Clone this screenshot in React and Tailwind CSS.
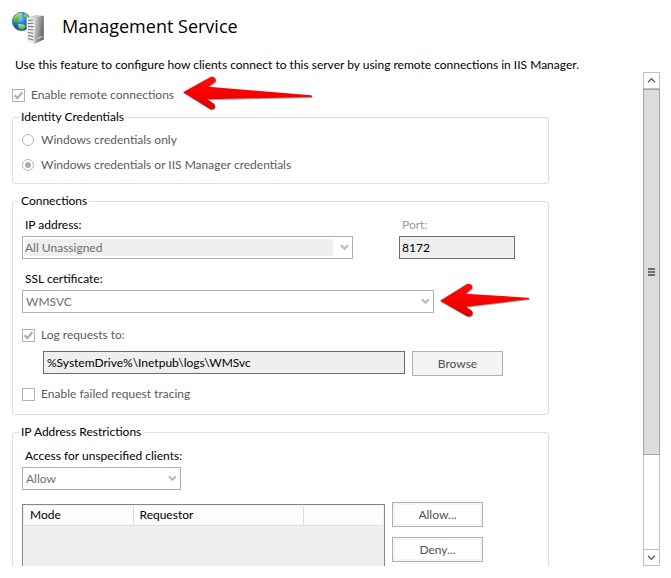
import React from "react";

function ServerGlobeIcon() {
  return (
    <svg width="33" height="33" viewBox="0 0 33 33" aria-hidden="true" className="shrink-0">
      <defs>
        <radialGradient id="sea" cx="0.4" cy="0.3" r="0.75">
          <stop offset="0" stopColor="#9fd6ff" />
          <stop offset="0.4" stopColor="#2f7fdc" />
          <stop offset="1" stopColor="#08319a" />
        </radialGradient>
        <linearGradient id="side" x1="0" y1="0" x2="1" y2="0.4">
          <stop offset="0" stopColor="#dcdcdc" />
          <stop offset="0.5" stopColor="#a2a2a2" />
          <stop offset="1" stopColor="#666" />
        </linearGradient>
        <linearGradient id="land" x1="0" y1="0" x2="0" y2="1">
          <stop offset="0" stopColor="#b9ec78" />
          <stop offset="1" stopColor="#2f9a2c" />
        </linearGradient>
      </defs>
      <circle cx="9.5" cy="9.5" r="9.2" fill="url(#sea)" stroke="#1650a8" strokeWidth="0.5" />
      <path d="M1.6 5.4 4.6 2 9.5 0.9 10.6 2.6 8.2 4.4 8.6 6.4 6 8 5.2 10.6 3 11.2 0.9 9Z" fill="url(#land)" />
      <path d="M12.5 1.6 16.5 4 18 7.5 14.5 7.5 12 5Z" fill="url(#land)" />
      <path d="M6.2 12 11 12.2 14 14.2 11.4 17.6 8 18.2 6.4 15.5Z" fill="url(#land)" />
      <path d="M14.6 5.6 22.4 4.4 22.4 31.8 14.6 29.4Z" fill="#ececec" />
      <path d="M22.4 4.4 31.8 3.8 31.8 27.4 22.4 32Z" fill="url(#side)" />
      <path d="M14.6 5.6 24 3 31.8 3.8 22.4 5.6Z" fill="#c9c9c9" />
      <path
        d="M16 8.5 21.4 8M16 11.5 21.4 11.2M16 14.5 21.4 14.6M16 17.5 21.4 18M16 20.5 21.4 21.3M16 23.5 21.4 24.6M16 26.5 21.4 28"
        stroke="#777"
        strokeWidth="1.1"
      />
      <path d="M25.6 26.6 30.6 24.4" stroke="#e6e6e6" strokeWidth="1" />
    </svg>
  );
}

function RedArrow({ path, width, className }) {
  return (
    <svg width={width} height="38" viewBox={`0 0 ${width} 38`} aria-hidden="true" className={className}>
      <defs>
        <linearGradient id="red" x1="0" y1="0" x2="0" y2="1">
          <stop offset="0" stopColor="#ff0a0a" />
          <stop offset="0.5" stopColor="#fb0000" />
          <stop offset="1" stopColor="#d60000" />
        </linearGradient>
      </defs>
      <path d={path} transform="translate(0.6 1)" fill="#000" opacity="0.35" />
      <path d={path} fill="url(#red)" />
    </svg>
  );
}

const LONG_ARROW =
  "M1 18.3 28 3.3C32 1.5 35.5 5 33 8L26.5 12.7 129 21.3C130.6 21.7 130.6 22.7 129 22.9L25.5 25.2 32 29.8C35 33 31.5 37 27.5 34.8Z";
const SHORT_ARROW =
  "M1 18.7 27.5 2.3C31.5 0.5 35 4 32.4 7L26.7 11.7 89 15.7C90.6 16 90.6 17 89 17.2L27 24.7 32.6 28.6C35.5 31.5 32 36 28 34.2Z";

function Group({ title, className = "", children }) {
  return (
    <fieldset className={`min-w-0 rounded-[3px] border border-[#d5dfe5] px-[9px] ${className}`}>
      <legend className="-ml-[3px] px-0.5 text-black">{title}</legend>
      {children}
    </fieldset>
  );
}

function CheckBox({ label, checked = false }) {
  return (
    <label className="flex items-center gap-1.5 text-[#5a5a5a]">
      <span className="grid shrink-0 place-items-center">
        <input
          type="checkbox"
          defaultChecked={checked}
          disabled
          className="col-start-1 row-start-1 size-[13px] appearance-none border border-[#adb2b5] bg-white"
        />
        {checked && (
          <svg width="9" height="9" viewBox="0 0 9 9" aria-hidden="true" className="col-start-1 row-start-1">
            <path d="M0.6 4.2 3.4 7 8.4 1.2" fill="none" stroke="#adb1b3" strokeWidth="2.3" />
          </svg>
        )}
      </span>
      {label}
    </label>
  );
}

function Radio({ label, checked = false }) {
  return (
    <label className="flex items-center gap-[7px] text-[#5a5a5a]">
      <span className="grid shrink-0 place-items-center">
        <input
          type="radio"
          name="credentials"
          defaultChecked={checked}
          disabled
          className="col-start-1 row-start-1 size-3 appearance-none rounded-full border border-[#b4b8ba] bg-white"
        />
        {checked && <span className="col-start-1 row-start-1 size-1.5 rounded-full bg-[#a8adb0]" />}
      </span>
      {label}
    </label>
  );
}

function Chevron({ className }) {
  return (
    <svg width="9" height="7" viewBox="0 0 9 7" aria-hidden="true" className={className}>
      <path d="M1 1.3 4.5 4.8 8 1.3" fill="none" stroke="currentColor" strokeWidth="2" />
    </svg>
  );
}

function Select({ id, value, filled = false, className = "" }) {
  return (
    <div className={`flex h-[23px] items-center border border-[#abb0b3] bg-white p-0.5 ${className}`}>
      <select
        id={id}
        disabled
        className={`h-full min-w-0 flex-1 appearance-none text-[#6e6e6e] opacity-100 ${filled ? "bg-[#efefef]" : "pl-px"}`}
      >
        <option>{value}</option>
      </select>
      <Chevron className="mr-px ml-[7px] shrink-0 text-[#b9b9b9]" />
    </div>
  );
}

function Button({ children, raised = false }) {
  return (
    <button
      type="button"
      disabled
      className={`h-[25px] w-[91px] shrink-0 border border-[#adb2b5] text-center text-[#505050] ${
        raised ? "bg-white ring-2 ring-[#f4f4f4] ring-inset" : "bg-[#f4f4f4]"
      }`}
    >
      {children}
    </button>
  );
}

function ScrollBar() {
  return (
    <div className="flex w-[17px] shrink-0 flex-col">
      <button type="button" aria-label="Scroll up" className="grid h-[17px] place-items-center border border-[#bfbfbf] text-[#666]">
        <svg width="9" height="7" viewBox="0 0 9 7" aria-hidden="true">
          <path d="M1 5.2 4.5 1.7 8 5.2" fill="none" stroke="currentColor" strokeWidth="1.5" />
        </svg>
      </button>
      <div className="flex basis-0 grow-[366] flex-col items-center justify-center gap-px border border-[#a3a3a3] bg-[#dcdcdc]">
        <span className="h-0.5 w-[7px] bg-[#6b6b6b]" />
        <span className="h-0.5 w-[7px] bg-[#6b6b6b]" />
        <span className="h-0.5 w-[7px] bg-[#6b6b6b]" />
      </div>
      <div className="basis-0 grow-[94] border-x border-[#bfbfbf]" />
      <button type="button" aria-label="Scroll down" className="grid h-[17px] place-items-center border border-[#bfbfbf] text-[#666]">
        <svg width="9" height="7" viewBox="0 0 9 7" aria-hidden="true">
          <path d="M1 1.8 4.5 5.3 8 1.8" fill="none" stroke="currentColor" strokeWidth="1.5" />
        </svg>
      </button>
    </div>
  );
}

export default function App() {
  return (
    <div className="flex h-screen flex-col overflow-hidden bg-white pb-3 font-['Lato',sans-serif] text-[12px] leading-4 text-black">
      <header className="shrink-0 px-3 pt-3">
        <div className="flex items-start gap-[17px]">
          <ServerGlobeIcon />
          <h1 className="font-['Open_Sans',sans-serif] text-[18px] leading-7">Management Service</h1>
        </div>
        <p className="mt-3 pl-[3px] leading-[15px] whitespace-nowrap">
          Use this feature to configure how clients connect to this server by using remote connections in IIS Manager.
        </p>
      </header>

      <div className="flex min-h-0 flex-1 justify-between pr-[11px] pl-3">
        <main className="w-full max-w-[537px] overflow-hidden pt-[15px]">
          <div className="relative flex">
            <CheckBox label="Enable remote connections" checked />
            <RedArrow path={LONG_ARROW} width={132} className="absolute -top-[13px] left-[170px]" />
          </div>

          <Group title="Identity Credentials" className="mt-1.5 pb-2.5">
            <div className="flex flex-col gap-[9px] pt-[7px]">
              <Radio label="Windows credentials only" />
              <Radio label="Windows credentials or IIS Manager credentials" checked />
            </div>
          </Group>

          <Group title="Connections" className="mt-[9px] pb-3">
            <div className="flex gap-[46px] pt-2">
              <div className="flex w-[331px] flex-col gap-[3px]">
                <label htmlFor="ip" className="pl-[3px]">IP address:</label>
                <Select id="ip" value="All Unassigned" filled />
              </div>
              <div className="flex w-[116px] flex-col gap-[3px]">
                <label htmlFor="port" className="pl-[3px] text-[#9a9a9a]">Port:</label>
                <input
                  id="port"
                  readOnly
                  defaultValue="8172"
                  className="h-[23px] w-full border border-[#6d6d6d] bg-[#efefef] px-0.5"
                />
              </div>
            </div>
            <div className="relative flex flex-col gap-[3px] pt-3">
              <label htmlFor="ssl" className="pl-[3px]">SSL certificate:</label>
              <Select id="ssl" value="WMSVC" className="w-[412px]" />
              <RedArrow path={SHORT_ARROW} width={92} className="absolute top-[23px] left-[417px]" />
            </div>
            <div className="mt-3.5 flex flex-col gap-2">
              <CheckBox label="Log requests to:" checked />
              <div className="flex gap-[7px] pl-[21px]">
                <input
                  aria-label="Log directory"
                  readOnly
                  defaultValue="%SystemDrive%\Inetpub\logs\WMSvc"
                  className="h-[23px] w-[362px] border border-[#6d6d6d] bg-[#efefef] px-[3px]"
                />
                <Button>Browse</Button>
              </div>
            </div>
            <div className="mt-2.5">
              <CheckBox label="Enable failed request tracing" />
            </div>
          </Group>

          <Group title="IP Address Restrictions" className="mt-[9px] pb-3">
            <div className="flex flex-col gap-[3px] pt-2">
              <label htmlFor="access" className="pl-[3px]">Access for unspecified clients:</label>
              <Select id="access" value="Allow" className="w-[159px]" />
            </div>
            <div className="mt-3 flex items-start gap-[7px]">
              <div className="mt-0.5 h-[140px] w-[363px] border border-[#828790] bg-[#efefef] p-px">
                <table className="w-full table-fixed border-collapse bg-[#fcfcfc] text-left">
                  <thead>
                    <tr className="h-[19px] border-b border-[#dedede]">
                      <th className="w-[109px] border-r border-[#dedede] px-1.5 font-normal">Mode</th>
                      <th className="w-[170px] border-r border-[#dedede] px-1.5 font-normal">Requestor</th>
                      <th />
                    </tr>
                  </thead>
                </table>
              </div>
              <div className="flex flex-col gap-2.5">
                <Button raised>Allow...</Button>
                <Button raised>Deny...</Button>
              </div>
            </div>
          </Group>
        </main>
        <ScrollBar />
      </div>
    </div>
  );
}
